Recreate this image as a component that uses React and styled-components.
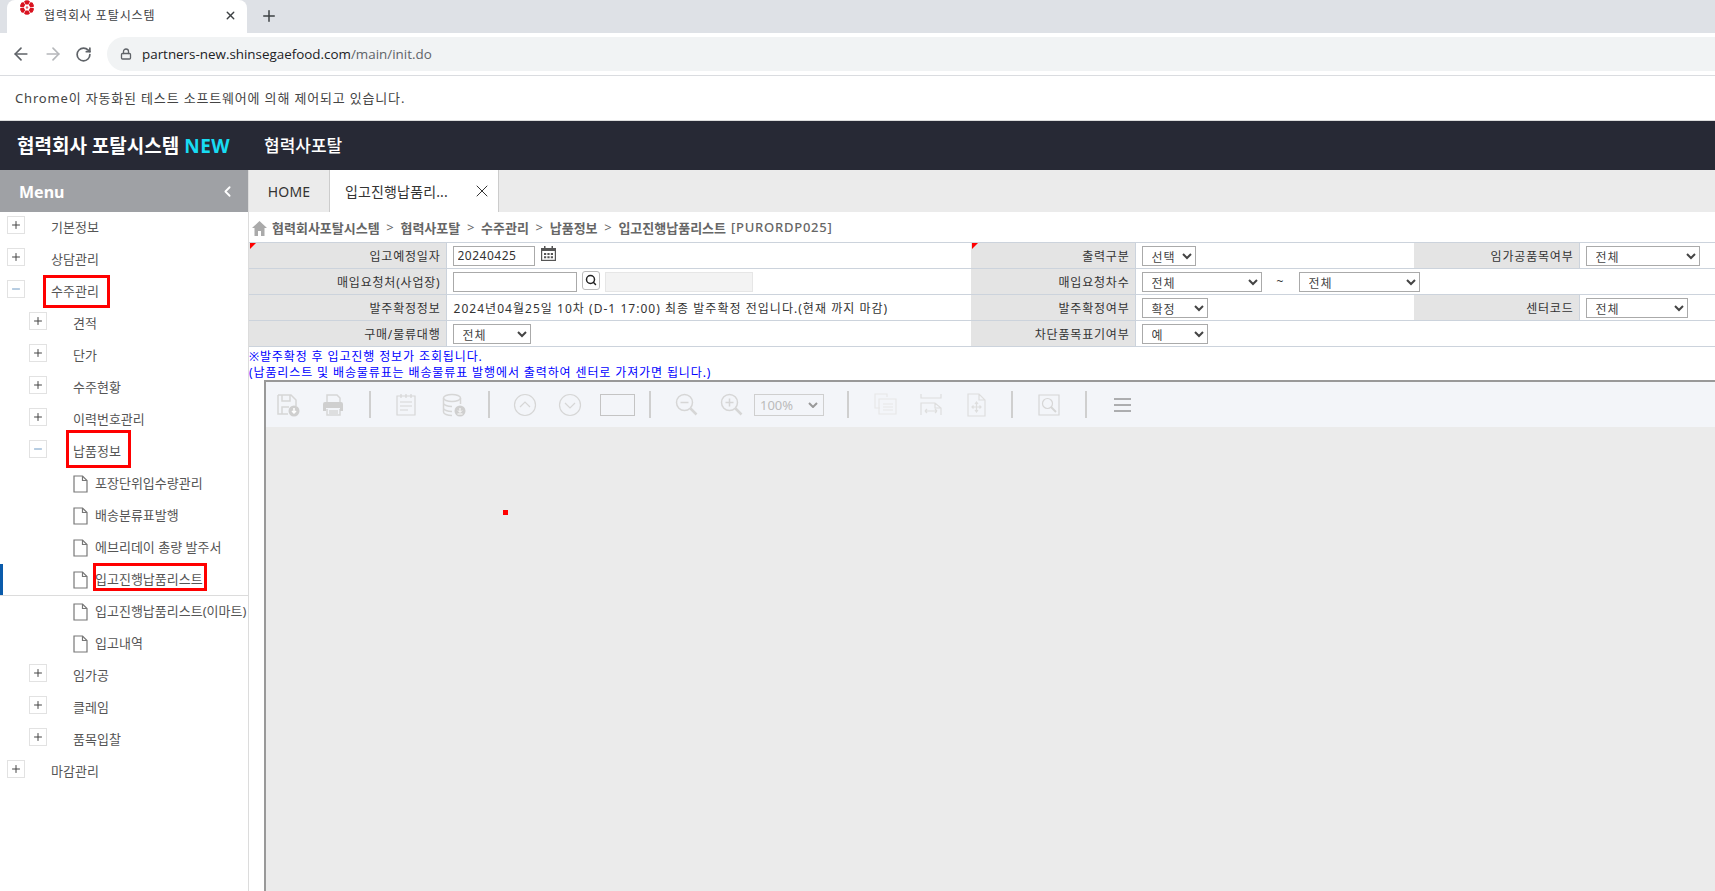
import React from "react";
import styled, { createGlobalStyle } from "styled-components";
import { ArrowLeft, ArrowRight, RotateCw, Lock, X, Plus, Minus, ChevronLeft, Search } from "lucide-react";

const GlobalStyle = createGlobalStyle`
  html, body { margin: 0; padding: 0; height: 100%; background: #fff; }
  body { font-family: "Noto Sans", "Noto Sans CJK KR", sans-serif; overflow: hidden; }
  * { box-sizing: border-box; }
`;

const Page = styled.div`
  display: flex;
  flex-direction: column;
  height: 891px;
  overflow: hidden;
`;

/* browser chrome */
const TabStrip = styled.div`
  display: flex;
  align-items: flex-start;
  height: 33px;
  padding-left: 7px;
  background: #dee1e6;
  flex: none;
`;
const BrowserTab = styled.div`
  position: relative;
  display: flex;
  align-items: center;
  width: 240px;
  height: 33px;
  padding: 0 10px 3px 37px;
  background: #fff;
  border-top-right-radius: 8px;
  border-top-left-radius: 8px;
  font-size: 12px;
  color: #3c4043;
`;
const Favicon = styled.svg`
  position: absolute;
  left: 12px;
  top: 0;
  width: 16px;
  height: 16px;
`;
const TabTitle = styled.span`
  flex: 1;
  letter-spacing: 0.9px;
`;
const NewTab = styled.div`
  display: flex;
  align-items: center;
  margin: 7px 0 0 13px;
  color: #3c4043;
`;
const AddressRow = styled.div`
  display: flex;
  align-items: center;
  height: 43px;
  padding-left: 11px;
  border-bottom: 1px solid #dadce0;
  flex: none;
`;
const NavButton = styled.div`
  display: flex;
  width: 32px;
  color: ${(p) => (p.$off ? "#b5b7ba" : "#5f6368")};
`;
const AddressPill = styled.div`
  display: flex;
  align-items: center;
  flex: 1;
  height: 34px;
  padding-left: 13px;
  border-radius: 17px 0 0 17px;
  background: #f1f3f4;
  color: #5f6368;
  font-size: 13.4px;
  font-family: "Open Sans", sans-serif;
`;
const Domain = styled.span`
  margin-left: 10px;
  color: #202124;
`;
const InfoBar = styled.div`
  display: flex;
  align-items: center;
  height: 45px;
  padding: 0 0 2px 15px;
  border-bottom: 1px solid #dcdcdc;
  font-size: 13px;
  letter-spacing: 0.83px;
  color: #444;
  flex: none;
`;

/* app header */
const AppHeader = styled.header`
  display: flex;
  align-items: center;
  height: 49px;
  padding: 0 0 2px 17px;
  background: #272935;
  color: #fff;
  flex: none;
`;
const Brand = styled.div`
  width: 247px;
  font-size: 19px;
  font-weight: 700;
`;
const NewMark = styled.span`
  color: #18dcf2;
  font-weight: 700;
  letter-spacing: 0.5px;
`;
const PortalName = styled.div`
  font-size: 17px;
  font-weight: 500;
`;

const Main = styled.div`
  display: flex;
  flex: 1;
  min-height: 0;
`;

/* left menu */
const Sidebar = styled.aside`
  width: 249px;
  border-right: 1px solid #dcdcdc;
  flex: none;
  overflow: hidden;
`;
const MenuHead = styled.div`
  display: flex;
  align-items: center;
  justify-content: space-between;
  height: 42px;
  padding: 1px 12px 0 19px;
  background: #9fa1a5;
  color: #fff;
  font-size: 16px;
  font-weight: 700;
`;
const TreeRow = styled.div`
  position: relative;
  display: flex;
  align-items: flex-start;
  height: 32px;
  padding-left: ${(p) => [7, 29, 73][p.$level]}px;
  white-space: nowrap;
  border-bottom: ${(p) => (p.$active ? "1px solid #dcdcdc" : "none")};
  &::before {
    content: "";
    display: ${(p) => (p.$active ? "block" : "none")};
    position: absolute;
    left: 0;
    top: 0;
    bottom: 0;
    width: 3px;
    background: #0a5bab;
  }
`;
const Toggle = styled.span`
  display: flex;
  align-items: center;
  justify-content: center;
  width: 18px;
  height: 18px;
  margin: 4px 26px 0 0;
  border: 1px solid #e2e2e2;
  color: ${(p) => (p.$open ? "#6f9ac4" : "#444")};
`;
const DocIcon = styled.svg`
  width: 15px;
  height: 18px;
  margin: 7px 7px 0 0;
  flex: none;
`;
const TreeLabel = styled.span`
  position: relative;
  display: inline-block;
  font-size: 13px;
  line-height: 31px;
  color: #555;
`;
const RedBox = styled.span`
  position: absolute;
  top: ${(p) => p.$t}px;
  right: ${(p) => p.$r}px;
  bottom: ${(p) => p.$b}px;
  left: ${(p) => p.$l}px;
  border: 3px solid #f00;
`;

/* content */
const Content = styled.main`
  display: flex;
  flex-direction: column;
  flex: 1;
  min-width: 0;
`;
const TabBar = styled.div`
  display: flex;
  height: 42px;
  background: #ebebeb;
  flex: none;
`;
const PageTab = styled.div`
  display: flex;
  align-items: center;
  justify-content: ${(p) => (p.$active ? "space-between" : "center")};
  width: ${(p) => (p.$active ? "170px" : "80px")};
  padding: ${(p) => (p.$active ? "0 6px 0 15px" : "0")};
  background: ${(p) => (p.$active ? "#fff" : "transparent")};
  border-left: ${(p) => (p.$active ? "1px solid #ccc" : "none")};
  border-right: ${(p) => (p.$active ? "1px solid #ccc" : "none")};
  font-size: 14px;
  letter-spacing: 0.15px;
  color: #333;
`;
const Crumbs = styled.div`
  display: flex;
  align-items: center;
  height: 30px;
  padding-left: 2px;
  font-size: 13px;
  font-weight: 700;
  color: #666;
  flex: none;
`;
const HomeIcon = styled.svg`
  width: 17px;
  height: 16px;
  margin: 2px 4px 0 0;
`;
const Sep = styled.span`
  margin: 0 6.7px;
  font-weight: 400;
`;
const ScreenCode = styled.span`
  margin-left: 5px;
  font-weight: 500;
  letter-spacing: 0.75px;
`;
const FormTable = styled.table`
  width: 1466px;
  border-collapse: collapse;
  table-layout: fixed;
  border-top: 1px solid #ccd3dc;
  flex: none;
`;
const Row = styled.tr`
  height: 26px;
  border-bottom: 1px solid #ccd3dc;
`;
const LabelCell = styled.th`
  position: relative;
  padding: 0 5px 0 0;
  background: #e4e4e4;
  border-right: 1px solid #ccd3dc;
  font-size: 12px;
  font-weight: 400;
  letter-spacing: 0.8px;
  text-align: right;
  color: #333;
  &::before {
    content: "";
    display: ${(p) => (p.$required ? "block" : "none")};
    position: absolute;
    left: 1px;
    top: 0;
    border-top: 6px solid #f00;
    border-right: 6px solid transparent;
  }
`;
const ValueCell = styled.td`
  padding: 0 0 0 6px;
  font-size: 12px;
  color: #333;
`;
const CellText = styled.span`
  margin-left: 1px;
  letter-spacing: 1.03px;
`;
const CellInner = styled.div`
  display: flex;
  align-items: center;
`;
const TextBox = styled.input`
  width: ${(p) => p.$w}px;
  height: 20px;
  padding: 0 4px;
  border: 1px solid ${(p) => (p.readOnly && !p.value ? "#e6e6e6" : "#aaa")};
  background: ${(p) => (p.readOnly && !p.value ? "#f3f3f3" : "#fff")};
  margin-left: ${(p) => p.$ml || 0}px;
  font: 12px "Noto Sans", sans-serif;
  letter-spacing: 0.5px;
  color: #333;
  outline: none;
`;
const CalIcon = styled.svg`
  width: 15px;
  height: 15px;
  margin: -5px 0 0 6px;
`;
const SearchButton = styled.span`
  display: flex;
  align-items: center;
  justify-content: center;
  width: 18px;
  height: 19px;
  margin: -3px 0 0 5px;
  border: 1px solid #bbb;
  border-radius: 3px;
  color: #222;
`;
const Select = styled.select`
  width: ${(p) => p.$w}px;
  height: 20px;
  padding: 0 4px 0 5px;
  border: 1px solid #aaa;
  background: #fff;
  border-radius: 0;
  font: 12px "Noto Sans CJK KR", sans-serif;
  letter-spacing: 0.9px;
  color: #444;
`;
const Tilde = styled.span`
  width: 37px;
  text-align: center;
  font-size: 12px;
`;
const Notes = styled.div`
  height: 33px;
  padding-top: 2px;
  font-size: 12px;
  line-height: 16px;
  letter-spacing: 0.88px;
  white-space: nowrap;
  color: #00f;
  flex: none;
`;
const Viewer = styled.div`
  display: flex;
  flex-direction: column;
  flex: 1;
  margin-left: 15px;
  border-top: 2px solid #999;
  border-left: 2px solid #999;
  background: #ebebeb;
`;
const Toolbar = styled.div`
  display: flex;
  align-items: center;
  height: 45px;
  background: #f3f5f9;
  flex: none;
`;
const ToolSlot = styled.div`
  display: flex;
  align-items: center;
  justify-content: center;
  width: ${(p) => p.$w}px;
  flex: none;
`;
const ToolIcon = styled.svg`
  width: 24px;
  height: 24px;
  fill: none;
  stroke: ${(p) => p.$stroke || "#d6d6d6"};
  stroke-width: ${(p) => p.$weight || 1.5};
`;
const ToolSep = styled.span`
  width: 2px;
  height: 27px;
  background: #cfcfcf;
`;
const PageBox = styled.span`
  width: 35px;
  height: 22px;
  border: 1px solid #c4c4c4;
`;
const ZoomBox = styled.div`
  display: flex;
  align-items: center;
  justify-content: space-between;
  width: 70px;
  height: 22px;
  padding: 0 5px;
  border: 1px solid #cfcfcf;
  font-size: 13px;
  color: #bbb;
`;
const ViewerBody = styled.div`
  position: relative;
  flex: 1;
`;
const Dot = styled.span`
  position: absolute;
  left: 237px;
  top: 83px;
  width: 5px;
  height: 5px;
  background: #f00;
`;

const tree = [
  { level: 0, label: "기본정보" },
  { level: 0, label: "상담관리" },
  { level: 0, label: "수주관리", open: true, box: { t: -1, r: -11, b: -1, l: -8 } },
  { level: 1, label: "견적" },
  { level: 1, label: "단가" },
  { level: 1, label: "수주현황" },
  { level: 1, label: "이력번호관리" },
  { level: 1, label: "납품정보", open: true, box: { t: -6, r: -10, b: -1, l: -7 } },
  { level: 2, label: "포장단위입수량관리" },
  { level: 2, label: "배송분류표발행" },
  { level: 2, label: "에브리데이 총량 발주서" },
  { level: 2, label: "입고진행납품리스트", active: true, box: { t: -1, r: -4, b: 4, l: -2 } },
  { level: 2, label: "입고진행납품리스트(이마트)" },
  { level: 2, label: "입고내역" },
  { level: 1, label: "임가공" },
  { level: 1, label: "클레임" },
  { level: 1, label: "품목입찰" },
  { level: 0, label: "마감관리" },
];

function TreeItem({ item }) {
  return (
    <TreeRow $level={item.level} $active={item.active}>
      {item.level === 2 ? (
        <DocIcon viewBox="0 0 15 18" fill="none" stroke="#777" strokeWidth="1.2">
          <path d="M1 1h8.5L14 5.5V17H1z" />
          <path d="M9.5 1v4.5H14" />
        </DocIcon>
      ) : (
        <Toggle $open={item.open}>
          {item.open ? <Minus size={12} strokeWidth={2} /> : <Plus size={12} strokeWidth={2} />}
        </Toggle>
      )}
      <TreeLabel>
        {item.label}
        {item.box && <RedBox $t={item.box.t} $r={item.box.r} $b={item.box.b} $l={item.box.l} />}
      </TreeLabel>
    </TreeRow>
  );
}

function Pick({ w, value }) {
  return (
    <Select $w={w} defaultValue={value}>
      <option>{value}</option>
    </Select>
  );
}

function Flower() {
  const petals = [0, 60, 120, 180, 240, 300];
  return (
    <Favicon viewBox="0 0 16 16">
      {petals.map((a) => (
        <path key={a} d="M6.600 4.600L5 1.500 7.200 0 8 .8 8.800 0 11 1.500 9.400 4.600z" fill="#d9121f" transform={`rotate(${a} 8 7.5)`} />
      ))}
      <circle cx="8" cy="7.500" r="1.200" fill="#e4606a" />
    </Favicon>
  );
}

function ViewerToolbar() {
  return (
    <Toolbar>
      <ToolSlot $w={44}>
        <ToolIcon viewBox="0 0 24 24">
          <path d="M2 2h13l5 5v6M2 2v19h10M6 2v6h8V2M6 21v-7h7" />
          <circle cx="18" cy="18" r="5.500" fill="#cfcfcf" stroke="none" />
          <path d="M18 15v5m-2-2 2 2 2-2" stroke="#fff" />
        </ToolIcon>
      </ToolSlot>
      <ToolSlot $w={46}>
        <ToolIcon viewBox="0 0 24 24">
          <path d="M6 9V2h10l3 3v4M6 16v6h13v-6" />
          <path d="M4 9h16a2 2 0 0 1 2 2v7h-3v-3H5v3H2v-7a2 2 0 0 1 2-2z" fill="#cfcfcf" stroke="none" />
          <path d="M8 18h9M8 20h9" />
        </ToolIcon>
      </ToolSlot>
      <ToolSlot $w={28}><ToolSep /></ToolSlot>
      <ToolSlot $w={44}>
        <ToolIcon viewBox="0 0 24 24" $weight={1.2}>
          <path d="M3 3h18v19H3zM7 1v4M12 1v4M17 1v4M6 9h12M6 13h12M6 17h8" />
        </ToolIcon>
      </ToolSlot>
      <ToolSlot $w={52}>
        <ToolIcon viewBox="0 0 24 24">
          <ellipse cx="10" cy="5" rx="8.500" ry="3.500" />
          <path d="M1.500 5v14c0 2 4 3.500 8.500 3.500M18.500 5v6M1.500 10c0 2 4 3.500 8.500 3.500M1.500 15c0 2 4 3.500 8.500 3.500" />
          <circle cx="18" cy="18" r="5.500" fill="#cfcfcf" stroke="none" />
          <path d="M18 15v4m-2-1.500 2 2 2-2M15.500 21h5" stroke="#fff" strokeWidth="1" />
        </ToolIcon>
      </ToolSlot>
      <ToolSlot $w={18}><ToolSep /></ToolSlot>
      <ToolSlot $w={54}>
        <ToolIcon viewBox="0 0 24 24" $weight={1.2}>
          <circle cx="12" cy="12" r="10.500" />
          <path d="M7 14l5-5 5 5" />
        </ToolIcon>
      </ToolSlot>
      <ToolSlot $w={36}>
        <ToolIcon viewBox="0 0 24 24" $weight={1.2}>
          <circle cx="12" cy="12" r="10.500" />
          <path d="M7 10l5 5 5-5" />
        </ToolIcon>
      </ToolSlot>
      <ToolSlot $w={58}><PageBox /></ToolSlot>
      <ToolSlot $w={8}><ToolSep /></ToolSlot>
      <ToolSlot $w={66}>
        <ToolIcon viewBox="0 0 24 24">
          <circle cx="9.500" cy="9.500" r="8" />
          <path d="M5.500 9.500h8" />
          <path d="M15.500 15.500l6 6" strokeWidth="2.500" />
        </ToolIcon>
      </ToolSlot>
      <ToolSlot $w={24}>
        <ToolIcon viewBox="0 0 24 24">
          <circle cx="9.500" cy="9.500" r="8" />
          <path d="M5.500 9.500h8M9.500 5.500v8" />
          <path d="M15.500 15.500l6 6" strokeWidth="2.500" />
        </ToolIcon>
      </ToolSlot>
      <ToolSlot $w={90}>
        <ZoomBox>
          100%
          <svg width="10" height="6" viewBox="0 0 10 6" fill="none" stroke="#999" strokeWidth="2"><path d="M1 1l4 4 4-4" /></svg>
        </ZoomBox>
      </ToolSlot>
      <ToolSlot $w={28}><ToolSep /></ToolSlot>
      <ToolSlot $w={46}>
        <ToolIcon viewBox="0 0 24 24" $stroke="#e8e8e8" $weight={1.2}>
          <path d="M7 15H2V1h12v3M6 6h17v15H6zM10 11h10M10 14h10M10 17h10" />
        </ToolIcon>
      </ToolSlot>
      <ToolSlot $w={46}>
        <ToolIcon viewBox="0 0 24 24" $stroke="#dedede" $weight={1.2}>
          <path d="M2 1v4h20V1M2 22V10h14l6 5v7M6 18h12M6 18l2-2M6 18l2 2M18 18l-2-2M18 18l-2 2M16 10v5h6" />
        </ToolIcon>
      </ToolSlot>
      <ToolSlot $w={44}>
        <ToolIcon viewBox="0 0 24 24" $stroke="#dedede" $weight={1.2}>
          <path d="M4 1h11l6 6v16H4zM15 1v6h6M12.500 9v10M8 14h9M11 11l1.500-2 1.500 2M11 17l1.500 2 1.500-2M9.500 12.500L8 14l1.500 1.500M15.500 12.500L17 14l-1.500 1.500" />
        </ToolIcon>
      </ToolSlot>
      <ToolSlot $w={28}><ToolSep /></ToolSlot>
      <ToolSlot $w={46}>
        <ToolIcon viewBox="0 0 24 24" $weight={1.2}>
          <path d="M2 2h20v20H2z" />
          <circle cx="10.500" cy="10.500" r="5" />
          <path d="M14 14l5 5" strokeWidth="2" />
        </ToolIcon>
      </ToolSlot>
      <ToolSlot $w={28}><ToolSep /></ToolSlot>
      <ToolSlot $w={44}>
        <ToolIcon viewBox="0 0 24 24" $stroke="#666" $weight={1}>
          <path d="M4 6h17M4 12h17M4 18h17" />
        </ToolIcon>
      </ToolSlot>
    </Toolbar>
  );
}

export default function App() {
  return (
    <Page>
      <GlobalStyle />
      <TabStrip>
        <BrowserTab>
          <Flower />
          <TabTitle>협력회사 포탈시스템</TabTitle>
          <X size={13} strokeWidth={2.5} />
        </BrowserTab>
        <NewTab><Plus size={18} strokeWidth={2} /></NewTab>
      </TabStrip>
      <AddressRow>
        <NavButton><ArrowLeft size={20} strokeWidth={2} /></NavButton>
        <NavButton $off><ArrowRight size={20} strokeWidth={2} /></NavButton>
        <NavButton><RotateCw size={17} strokeWidth={2.4} /></NavButton>
        <AddressPill>
          <Lock size={12} strokeWidth={2.6} />
          <Domain>partners-new.shinsegaefood.com</Domain>/main/init.do
        </AddressPill>
      </AddressRow>
      <InfoBar>Chrome이 자동화된 테스트 소프트웨어에 의해 제어되고 있습니다.</InfoBar>
      <AppHeader>
        <Brand>협력회사 포탈시스템 <NewMark>NEW</NewMark></Brand>
        <PortalName>협력사포탈</PortalName>
      </AppHeader>
      <Main>
        <Sidebar>
          <MenuHead>Menu <ChevronLeft size={17} strokeWidth={2.5} /></MenuHead>
          {tree.map((item) => <TreeItem key={item.label} item={item} />)}
        </Sidebar>
        <Content>
          <TabBar>
            <PageTab>HOME</PageTab>
            <PageTab $active>입고진행납품리... <X size={20} strokeWidth={1.2} /></PageTab>
          </TabBar>
          <Crumbs>
            <HomeIcon viewBox="0 0 17 16"><path d="M8.500 1L1 8h2.500v8h3.500v-5h3v5h3.500V8H16z" fill="#aaa" /></HomeIcon>
            협력회사포탈시스템<Sep>&gt;</Sep>협력사포탈<Sep>&gt;</Sep>수주관리<Sep>&gt;</Sep>납품정보<Sep>&gt;</Sep>입고진행납품리스트<ScreenCode>[PURORDP025]</ScreenCode>
          </Crumbs>
          <FormTable>
            <colgroup>
              <col width="197" /><col width="525" /><col width="164" /><col width="279" /><col width="165" /><col width="136" />
            </colgroup>
            <tbody>
              <Row>
                <LabelCell $required>입고예정일자</LabelCell>
                <ValueCell>
                  <CellInner>
                    <TextBox $w={82} defaultValue="20240425" />
                    <CalIcon viewBox="0 0 15 15">
                      <path d="M3 0h1.500v2h6V0H12v2h3v13H0V2h3z" fill="#555" />
                      <path d="M1.200 5h12.600v8.800H1.200z" fill="#fff" />
                      <path d="M3 7h2.200v2H3zM6.400 7h2.200v2H6.400zM9.800 7H12v2H9.800zM3 10.200h2.200v2H3zM6.400 10.200h2.200v2H6.400zM9.800 10.200H12v2H9.800z" fill="#555" />
                    </CalIcon>
                  </CellInner>
                </ValueCell>
                <LabelCell $required>출력구분</LabelCell>
                <ValueCell><CellInner><Pick w={54} value="선택" /></CellInner></ValueCell>
                <LabelCell>임가공품목여부</LabelCell>
                <ValueCell><CellInner><Pick w={114} value="전체" /></CellInner></ValueCell>
              </Row>
              <Row>
                <LabelCell>매입요청처(사업장)</LabelCell>
                <ValueCell>
                  <CellInner>
                    <TextBox $w={124} />
                    <SearchButton><Search size={12} strokeWidth={3} /></SearchButton>
                    <TextBox $w={148} $ml={5} readOnly />
                  </CellInner>
                </ValueCell>
                <LabelCell>매입요청차수</LabelCell>
                <ValueCell colSpan={3}>
                  <CellInner>
                    <Pick w={120} value="전체" />
                    <Tilde>~</Tilde>
                    <Pick w={121} value="전체" />
                  </CellInner>
                </ValueCell>
              </Row>
              <Row>
                <LabelCell>발주확정정보</LabelCell>
                <ValueCell><CellText>2024년04월25일 10차 (D-1 17:00) 최종 발주확정 전입니다.(현재 까지 마감)</CellText></ValueCell>
                <LabelCell>발주확정여부</LabelCell>
                <ValueCell><CellInner><Pick w={66} value="확정" /></CellInner></ValueCell>
                <LabelCell>센터코드</LabelCell>
                <ValueCell><CellInner><Pick w={102} value="전체" /></CellInner></ValueCell>
              </Row>
              <Row>
                <LabelCell>구매/물류대행</LabelCell>
                <ValueCell><CellInner><Pick w={78} value="전체" /></CellInner></ValueCell>
                <LabelCell>차단품목표기여부</LabelCell>
                <ValueCell colSpan={3}><CellInner><Pick w={66} value="예" /></CellInner></ValueCell>
              </Row>
            </tbody>
          </FormTable>
          <Notes>
            ※발주확정 후 입고진행 정보가 조회됩니다.<br />
            (납품리스트 및 배송물류표는 배송물류표 발행에서 출력하여 센터로 가져가면 됩니다.)
          </Notes>
          <Viewer>
            <ViewerToolbar />
            <ViewerBody><Dot /></ViewerBody>
          </Viewer>
        </Content>
      </Main>
    </Page>
  );
}
